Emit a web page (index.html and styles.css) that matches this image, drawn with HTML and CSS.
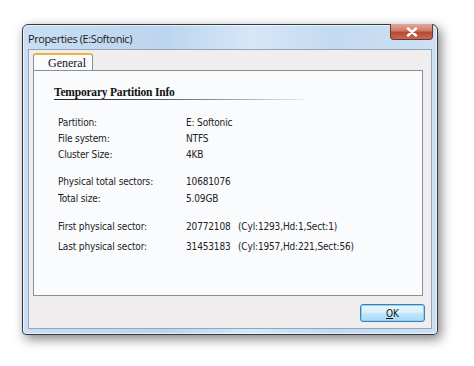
FILE: index.html
```html
<!DOCTYPE html>
<html>
<head>
<meta charset="utf-8">
<link rel="stylesheet" href="styles.css">
</head>
<body>
<div class="window">
  <div class="titlebar">
    <span class="title">Properties (E:Softonic)</span>
    <div class="close">
      <svg width="12" height="10" viewBox="0 0 12 10"><path d="M2 1.5 L10 8.5 M10 1.5 L2 8.5" stroke="#fff" stroke-width="2.4" stroke-linecap="round"/></svg>
    </div>
  </div>
  <div class="client">
    <div class="tabs"><div class="tab">General</div></div>
    <div class="panel">
      <div class="heading">Temporary Partition Info</div>
      <div class="group">
        <div class="row"><span class="lbl">Partition:</span><span class="val">E: Softonic</span></div>
        <div class="row r2"><span class="lbl">File system:</span><span class="val">NTFS</span></div>
        <div class="row"><span class="lbl">Cluster Size:</span><span class="val">4KB</span></div>
      </div>
      <div class="group g2">
        <div class="row"><span class="lbl">Physical total sectors:</span><span class="val">10681076</span></div>
        <div class="row"><span class="lbl">Total size:</span><span class="val">5.09GB</span></div>
      </div>
      <div class="group g3">
        <div class="row"><span class="lbl">First physical sector:</span><span class="val">20772108</span><span class="extra">(Cyl:1293,Hd:1,Sect:1)</span></div>
        <div class="row r7"><span class="lbl">Last physical sector:</span><span class="val">31453183</span><span class="extra">(Cyl:1957,Hd:221,Sect:56)</span></div>
      </div>
    </div>
    <div class="buttons"><button class="ok"><u>O</u>K</button></div>
  </div>
</div>
</body>
</html>
```
FILE: styles.css
```css
html, body { margin: 0; padding: 0; background: #ffffff; }
body { width: 474px; height: 366px; overflow: hidden; }

.window {
  margin: 24px 0 0 22px;
  width: 414px;
  height: 309px;
  border: 1px solid #353a40;
  border-radius: 6px 6px 4px 4px;
  background: linear-gradient(90deg, #c9def2 0%, #bcd5ee 35%, #d6e7f7 55%, #c4daf0 75%, #cde0f3 100%);
  box-shadow: 3px 4px 12px rgba(0,0,0,0.5), inset 0 0 0 1px rgba(255,255,255,0.6);
  display: flex;
  flex-direction: column;
  font-family: "Liberation Sans", Arial, sans-serif;
}

.titlebar {
  height: 24px;
  display: flex;
  align-items: flex-start;
  justify-content: space-between;
}
.title {
  font-family: "Open Sans", "DejaVu Sans", sans-serif;
  font-size: 11px;
  color: #1a1a1a;
  margin: 6px 0 0 5px;
  letter-spacing: -0.4px;
}
.close {
  width: 41px;
  height: 15px;
  margin-right: 4px;
  margin-top: -1px;
  border: 1px solid #6a3a32;
  border-top: none;
  border-radius: 0 0 4px 4px;
  background: linear-gradient(180deg, #e2a89c 0%, #cf7b68 45%, #b94a34 55%, #c76850 100%);
  display: flex;
  align-items: center;
  justify-content: center;
}

.client {
  flex: 1;
  margin: 0 5px 5px 5px;
  background: #f0edee;
  border: 1px solid #8fa6bd;
  display: flex;
  flex-direction: column;
  padding: 3px 8px 0 4px;
}

.tabs { display: flex; height: 17px; }
.tab {
  width: 60px;
  height: 17px;
  box-sizing: border-box;
  border: 1px solid #8b8f98;
  border-bottom: none;
  border-top: 2px solid #f0b040;
  border-radius: 3px 3px 0 0;
  background: #fafbfd;
  font-family: "Liberation Serif", serif;
  font-size: 12px;
  color: #111;
  padding: 1px 0 0 14px;
  position: relative;
  z-index: 1;
  margin-bottom: -1px;
}

.panel {
  height: 226px;
  border: 1px solid #8b8f98;
  background: #fafbfd;
  box-sizing: border-box;
  padding: 15px 0 0 20px;
}

.heading {
  font-family: "Liberation Serif", serif;
  font-weight: bold;
  font-size: 11.5px;
  letter-spacing: -0.2px;
  color: #111;
  width: 250px;
  padding-bottom: 1px;
  border-bottom: 1px solid;
  border-image: linear-gradient(90deg, #222 0%, #555 40%, rgba(200,200,200,0.3) 100%) 1;
  margin-bottom: 14px;
}

.group { margin-left: 4px; }
.g2 { margin-top: 10px; }
.g3 { margin-top: 11px; }

.row {
  display: flex;
  height: 17px;
  align-items: center;
  font-family: "DejaVu Sans Condensed", "DejaVu Sans", sans-serif;
  font-stretch: condensed;
  font-size: 10px;
  letter-spacing: -0.15px;
  color: #222;
}
.r2 { height: 15px; }
.r7 { height: 22px; }
.lbl { width: 128px; flex-shrink: 0; }
.val { width: 52px; flex-shrink: 0; }

.buttons {
  display: flex;
  justify-content: flex-end;
  padding-top: 8px;
  margin-right: -2px;
}
.ok {
  width: 65px;
  height: 18px;
  border: 1px solid #3c7fb1;
  border-radius: 3px;
  background: linear-gradient(180deg, #eaf6fd 0%, #d9f0fc 45%, #bee6fd 55%, #a7d9f5 100%);
  box-shadow: inset 0 0 0 1px #8fd0f4;
  font-family: "DejaVu Sans Condensed", "DejaVu Sans", sans-serif;
  font-stretch: condensed;
  font-size: 10px;
  color: #111;
  padding: 0;
}
```
